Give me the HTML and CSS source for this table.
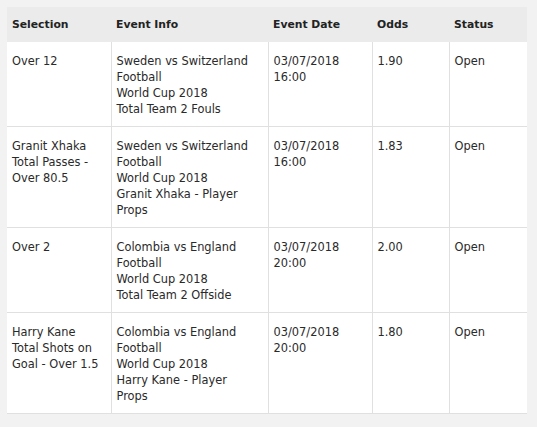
FILE: index.html
```html
<!DOCTYPE html>
<html>
<head>
<meta charset="utf-8">
<link rel="stylesheet" href="styles.css">
</head>
<body>
<div class="page">
<table class="bets">
<colgroup>
<col class="c-sel"><col class="c-info"><col class="c-date"><col class="c-odds"><col class="c-status">
</colgroup>
<thead>
<tr><th>Selection</th><th>Event Info</th><th>Event Date</th><th>Odds</th><th>Status</th></tr>
</thead>
<tbody>
<tr>
<td>Over 12</td>
<td>Sweden vs Switzerland<br>Football<br>World Cup 2018<br>Total Team 2 Fouls</td>
<td>03/07/2018<br>16:00</td>
<td>1.90</td>
<td>Open</td>
</tr>
<tr>
<td>Granit Xhaka<br>Total Passes -<br>Over 80.5</td>
<td>Sweden vs Switzerland<br>Football<br>World Cup 2018<br>Granit Xhaka - Player<br>Props</td>
<td>03/07/2018<br>16:00</td>
<td>1.83</td>
<td>Open</td>
</tr>
<tr>
<td>Over 2</td>
<td>Colombia vs England<br>Football<br>World Cup 2018<br>Total Team 2 Offside</td>
<td>03/07/2018<br>20:00</td>
<td>2.00</td>
<td>Open</td>
</tr>
<tr>
<td>Harry Kane<br>Total Shots on<br>Goal - Over 1.5</td>
<td>Colombia vs England<br>Football<br>World Cup 2018<br>Harry Kane - Player<br>Props</td>
<td>03/07/2018<br>20:00</td>
<td>1.80</td>
<td>Open</td>
</tr>
</tbody>
</table>
</div>
</body>
</html>
```
FILE: styles.css
```css
html, body {
  margin: 0;
  padding: 0;
  background: #f2f2f2;
}
.page {
  padding: 7px 10px 0 7px;
  font-family: "DejaVu Sans", sans-serif;
  font-size: 11.4px;
  color: #2a2a2a;
}
.bets {
  border-collapse: collapse;
  width: 520px;
  table-layout: fixed;
  background: #fff;
}
.c-sel { width: 104px; }
.c-info { width: 157px; }
.c-date { width: 104px; }
.c-odds { width: 77px; }
.c-status { width: 78px; }
.bets th {
  background: #ebebeb;
  color: #222;
  text-align: left;
  font-weight: bold;
  font-size: 10.8px;
  height: 35px;
  padding: 1px 5px 0 5px;
  box-sizing: border-box;
  line-height: 16px;
}
.bets td {
  vertical-align: top;
  padding: 11px 5px 9px 5px;
  line-height: 16px;
  border-left: 1px solid #e0e0e0;
  border-top: 1px solid #e0e0e0;
}
.bets td:first-child { border-left: none; }
.bets tbody tr:first-child td { border-top: none; }
.bets tbody tr:last-child td { border-bottom: 1px solid #e0e0e0; }
```
